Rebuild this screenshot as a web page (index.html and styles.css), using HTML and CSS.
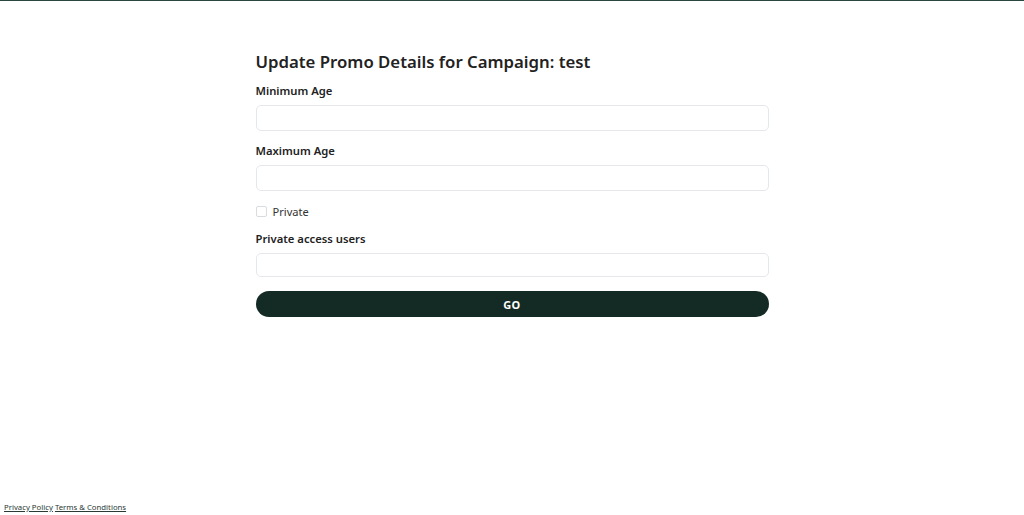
FILE: index.html
```html
<!DOCTYPE html>
<html>
<head>
<meta charset="utf-8">
<link rel="stylesheet" href="styles.css">
</head>
<body>
<div class="topbar"></div>
<main class="page">
  <form class="form">
    <h1 class="title">Update Promo Details for Campaign: test</h1>
    <label class="label">Minimum Age</label>
    <input class="input" type="text">
    <label class="label">Maximum Age</label>
    <input class="input" type="text">
    <div class="check-row">
      <span class="checkbox"></span>
      <span class="check-label">Private</span>
    </div>
    <label class="label">Private access users</label>
    <input class="input input-sm" type="text">
    <button class="btn" type="button">GO</button>
  </form>
</main>
<footer class="footer">
  <a class="link" href="#">Privacy Policy</a> <a class="link" href="#">Terms &amp; Conditions</a>
</footer>
</body>
</html>
```
FILE: styles.css
```css
* { box-sizing: border-box; }
html, body { margin: 0; padding: 0; height: 100%; }
body {
  font-family: "Noto Sans", "Open Sans", sans-serif;
  color: #1f2421;
  background: #fff;
  display: flex;
  flex-direction: column;
  min-height: 515px;
}
.topbar { height: 1px; background: #2a4640; }
.page { flex: 1; display: flex; justify-content: center; }
.form {
  width: 513px;
  display: flex;
  flex-direction: column;
  padding-top: 48px;
}
.title {
  font-size: 16.75px;
  font-weight: 600;
  margin: 0 0 8px 0;
  line-height: 26px;
  color: #222;
}
.label {
  font-size: 11.25px;
  font-weight: 600;
  line-height: 16px;
  margin-bottom: 6px;
  color: #222;
}
.input {
  height: 26px;
  border: 1px solid #e5e7eb;
  border-radius: 5px;
  margin: 0 0 12px 0;
  padding: 0 8px;
  font: inherit;
}
.input-sm { height: 24px; margin-bottom: 14px; }
.check-row {
  display: flex;
  align-items: center;
  gap: 6px;
  margin: 0 0 12px 0;
  height: 16px;
}
.checkbox {
  width: 11px; height: 11px;
  border: 1px solid #d9dcdf;
  border-radius: 2px;
}
.check-label { font-size: 11.1px; color: #333; }
.btn {
  height: 26px;
  border: none;
  border-radius: 13px;
  background: #132b24;
  color: #fff;
  font-family: inherit;
  font-size: 11px;
  font-weight: 700;
  letter-spacing: 0.3px;
}
.footer {
  padding: 0 0 2px 4px;
  font-size: 7.75px;
  line-height: 12px;
}
.link { color: #2a3a35; text-decoration: underline; }
```
